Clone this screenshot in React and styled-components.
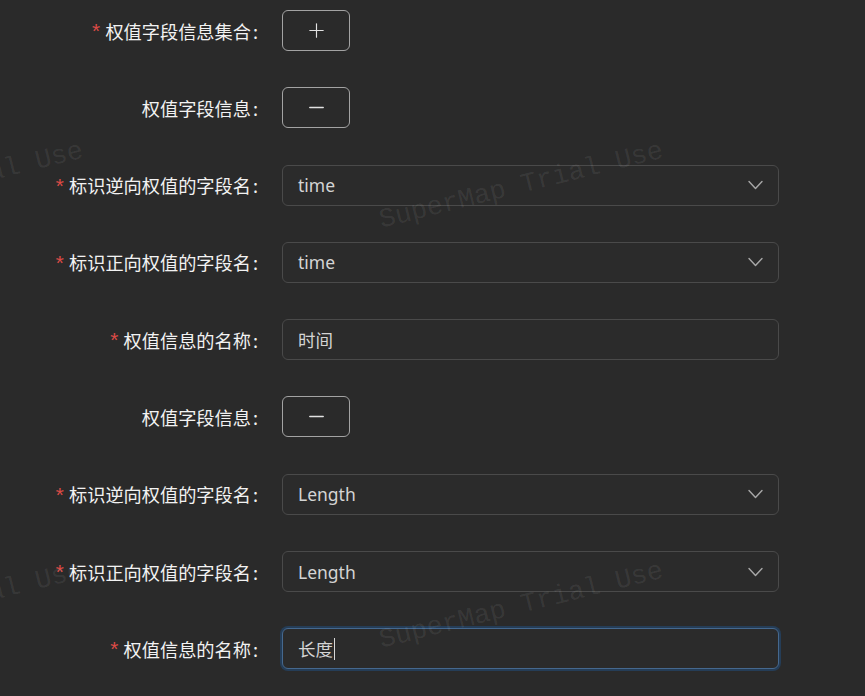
import React from "react";
import styled, { createGlobalStyle, css } from "styled-components";
import { Plus, Minus } from "lucide-react";

const GlobalStyle = createGlobalStyle`
  html, body {
    margin: 0;
    padding: 0;
    background: #2a2a2a;
  }
  body {
    font-family: "Noto Sans", "Noto Sans CJK SC", sans-serif;
    overflow: hidden;
  }
`;

const rows = [
  { label: "权值字段信息集合", required: true, kind: "add" },
  { label: "权值字段信息", kind: "remove" },
  { label: "标识逆向权值的字段名", required: true, kind: "select", value: "time" },
  { label: "标识正向权值的字段名", required: true, kind: "select", value: "time" },
  { label: "权值信息的名称", required: true, kind: "input", value: "时间" },
  { label: "权值字段信息", kind: "remove" },
  { label: "标识逆向权值的字段名", required: true, kind: "select", value: "Length" },
  { label: "标识正向权值的字段名", required: true, kind: "select", value: "Length" },
  { label: "权值信息的名称", required: true, kind: "input", value: "长度", focused: true },
];

const marks = [
  { x: 380, y: 208 },
  { x: -200, y: 208 },
  { x: 380, y: 628 },
  { x: -200, y: 628 },
];

function Chevron() {
  return (
    <svg width="15" height="10" viewBox="0 0 15 10" fill="none">
      <polyline
        points="1,1.5 7.5,8.5 14,1.5"
        stroke="currentColor"
        strokeWidth="1.4"
        strokeLinecap="round"
        strokeLinejoin="round"
      />
    </svg>
  );
}

export default function App() {
  return (
    <>
      <GlobalStyle />
      <Page>
        <Form>
          {rows.map((row, i) => (
            <FormItem key={i}>
              <Label>
                {row.required && <Star>*</Star>}
                {row.label}
                <Colon>:</Colon>
              </Label>
              <Control>
                {row.kind === "add" && (
                  <IconButton>
                    <Plus size={23} strokeWidth={1.2} />
                  </IconButton>
                )}
                {row.kind === "remove" && (
                  <IconButton>
                    <Minus size={23} strokeWidth={1.5} />
                  </IconButton>
                )}
                {row.kind === "select" && (
                  <Field>
                    <Value>{row.value}</Value>
                    <Arrow>
                      <Chevron />
                    </Arrow>
                  </Field>
                )}
                {row.kind === "input" && (
                  <Field $focused={row.focused}>
                    <Value>
                      {row.value}
                      {row.focused && <Caret />}
                    </Value>
                  </Field>
                )}
              </Control>
            </FormItem>
          ))}
        </Form>
        <Watermarks>
          {marks.map((m, i) => (
            <Mark key={i} style={{ left: m.x, top: m.y }}>
              SuperMap Trial Use
            </Mark>
          ))}
        </Watermarks>
      </Page>
    </>
  );
}

const Page = styled.div`
  position: relative;
  width: 865px;
  height: 696px;
  overflow: hidden;
  background: #2a2a2a;
`;

const Form = styled.div`
  display: flex;
  flex-direction: column;
  gap: 36.3px;
  padding-top: 10px;
`;

const FormItem = styled.div`
  display: grid;
  grid-template-columns: 258px 497px;
  column-gap: 24px;
  align-items: center;
  height: 41px;
`;

const Label = styled.label`
  display: flex;
  align-items: center;
  justify-content: flex-end;
  font-family: "Noto Sans CJK SC", sans-serif;
  font-size: 18.2px;
  color: #f2f2f2;
  white-space: nowrap;
`;

const Star = styled.span`
  color: #dc4a46;
  font-family: "Liberation Mono", monospace;
  font-size: 21px;
  margin-right: 3px;
  position: relative;
  top: 3px;
`;

const Colon = styled.span`
  margin-left: 2px;
`;

const Control = styled.div`
  display: flex;
  align-items: center;
`;

const IconButton = styled.button`
  display: flex;
  align-items: center;
  justify-content: center;
  width: 68px;
  height: 41px;
  padding: 0;
  background: transparent;
  border: 1px solid #a3a3a3;
  border-radius: 6px;
  color: #e2e2e2;
  cursor: pointer;
`;

const Field = styled.div`
  display: flex;
  align-items: center;
  justify-content: space-between;
  box-sizing: border-box;
  width: 497px;
  height: 41px;
  padding: 0 15px 0 15px;
  border: 1px solid #4a4a4a;
  border-radius: 6px;
  background: #2b2b2b;
  ${(p) =>
    p.$focused &&
    css`
      border-color: #45688e;
      box-shadow: 0 0 0 2px #253d57;
    `}
`;

const Value = styled.span`
  display: flex;
  align-items: center;
  font-size: 17.5px;
  color: #d4d4d4;
  font-family: "Noto Sans", "Noto Sans CJK SC", sans-serif;
`;

const Caret = styled.span`
  display: inline-block;
  width: 1px;
  height: 22px;
  margin-left: 1px;
  background: #d8d8d8;
`;

const Arrow = styled.span`
  display: flex;
  color: #a8a8a8;
`;

const Watermarks = styled.div`
  position: absolute;
  inset: 0;
  pointer-events: none;
`;

const Mark = styled.span`
  position: absolute;
  font-family: "Liberation Mono", "DejaVu Sans Mono", monospace;
  font-size: 27px;
  line-height: 27px;
  white-space: nowrap;
  color: rgba(255, 255, 255, 0.075);
  transform-origin: left center;
  transform: rotate(-14deg);
`;
